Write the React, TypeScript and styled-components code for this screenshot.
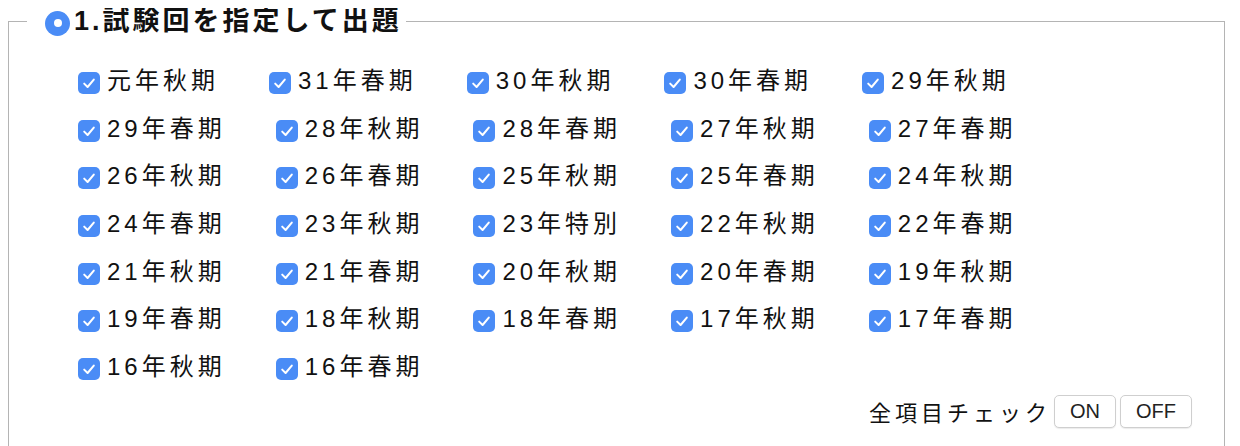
import styled, { createGlobalStyle } from 'styled-components';

const GlobalStyle = createGlobalStyle`
  body {
    margin: 8px;
    background: #fff;
    color: #111;
    font-family: "Liberation Sans", "Noto Sans CJK JP", sans-serif;
  }
`;

const ROUNDS = [
  '元年秋期', '31年春期', '30年秋期', '30年春期', '29年秋期',
  '29年春期', '28年秋期', '28年春期', '27年秋期', '27年春期',
  '26年秋期', '26年春期', '25年秋期', '25年春期', '24年秋期',
  '24年春期', '23年秋期', '23年特別', '22年秋期', '22年春期',
  '21年秋期', '21年春期', '20年秋期', '20年春期', '19年秋期',
  '19年春期', '18年秋期', '18年春期', '17年秋期', '17年春期',
  '16年秋期', '16年春期',
];

const Panel = styled.fieldset`
  margin: 0 7px 0 0;
  padding: 0 32px 24px 18px;
  border: 1px solid #b4b4b4;
  min-width: 0;
`;

const Title = styled.legend`
  display: flex;
  align-items: center;
  height: 26px;
  padding: 0 4px 0 18px;
  font-size: 27px;
  line-height: 26px;
  font-weight: bold;
  letter-spacing: 3px;
  color: #111;
`;

const TitleMark = styled.span`
  position: relative;
  width: 25px;
  height: 25px;
  margin: 2px 4px -2px 0;
  border-radius: 50%;
  background: #4a8cf6;
  flex-shrink: 0;

  &::after {
    content: '';
    position: absolute;
    left: 50%;
    top: 50%;
    width: 8px;
    height: 8px;
    margin: -4px 0 0 -4px;
    border-radius: 50%;
    background: #fff;
  }
`;

const ExamList = styled.div`
  display: flex;
  flex-wrap: wrap;
  row-gap: 19.67px;
  padding: 33px 0 0 51px;
`;

const ExamItem = styled.label`
  display: flex;
  align-items: center;
  gap: 7px;
  height: 28px;
  margin-right: 50px;
  font-size: 24px;
  line-height: 28px;
  letter-spacing: 4px;
  cursor: pointer;

  & input {
    position: absolute;
    opacity: 0;
    width: 0;
    height: 0;
  }
`;

const CheckBox = styled.span<{ $on: boolean }>`
  display: flex;
  width: 22px;
  height: 22px;
  margin-top: 4px;
  border-radius: 5px;
  background: ${(p) => (p.$on ? '#4a8cf6' : '#fff')};
  flex-shrink: 0;
`;

const Toolbar = styled.div`
  display: flex;
  justify-content: flex-end;
  align-items: center;
  margin-top: 14px;
`;

const ToolbarLabel = styled.span`
  font-size: 22px;
  letter-spacing: 4px;
  margin-right: 3px;
  color: #111;
`;

const ToggleButton = styled.button`
  height: 33px;
  padding: 0 15px;
  font: 20px "Liberation Sans", sans-serif;
  color: #222;
  background: #fff;
  border: 1px solid #cfcfcf;
  border-radius: 5px;
  box-shadow: 0 1px 1px rgba(0, 0, 0, 0.08);

  & + & {
    margin-left: 4px;
  }
`;

const Check = () => (
  <svg width="22" height="22" viewBox="0 0 22 22">
    <path
      d="M6.2 11.6 L9.6 15 L15.8 7.6"
      fill="none"
      stroke="#fff"
      strokeWidth="2"
      strokeLinecap="round"
      strokeLinejoin="round"
    />
  </svg>
);

const App = () => (
  <>
    <GlobalStyle />
    <Panel>
      <Title>
        <TitleMark />
        1.試験回を指定して出題
      </Title>
      <ExamList>
        {ROUNDS.map((r) => (
          <ExamItem key={r}>
            <input type="checkbox" defaultChecked />
            <CheckBox $on>
              <Check />
            </CheckBox>
            {r}
          </ExamItem>
        ))}
      </ExamList>
      <Toolbar>
        <ToolbarLabel>全項目チェック</ToolbarLabel>
        <ToggleButton>ON</ToggleButton>
        <ToggleButton>OFF</ToggleButton>
      </Toolbar>
    </Panel>
  </>
);

export default App;
